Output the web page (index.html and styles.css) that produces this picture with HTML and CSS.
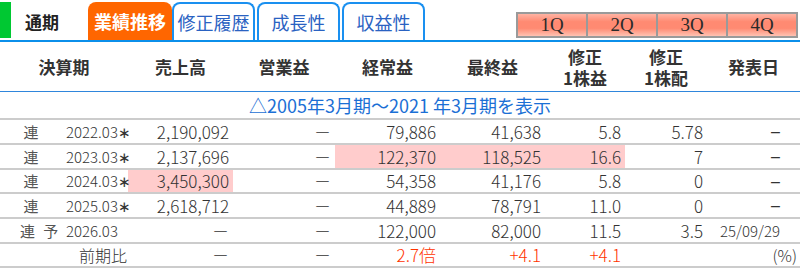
FILE: index.html
```html
<!DOCTYPE html>
<html lang="ja">
<head>
<meta charset="utf-8">
<title>業績推移</title>
<link rel="stylesheet" href="styles.css">
</head>
<body>
<div class="page">
  <div class="tabbar">
    <div class="mark"></div>
    <div class="tab tab-plain">通期</div>
    <div class="tab tab-active">業績推移</div>
    <div class="tab tab-link">修正履歴</div>
    <div class="tab tab-link">成長性</div>
    <div class="tab tab-link">収益性</div>
    <div class="quarters">
      <div class="q">1Q</div>
      <div class="q">2Q</div>
      <div class="q">3Q</div>
      <div class="q">4Q</div>
    </div>
  </div>
  <table class="fin">
    <colgroup>
      <col class="c-kind"><col class="c-date"><col class="c-sales"><col class="c-op"><col class="c-ord"><col class="c-net"><col class="c-eps"><col class="c-dps"><col class="c-day">
    </colgroup>
    <thead>
      <tr class="head">
        <th colspan="2">決算期</th>
        <th>売上高</th>
        <th>営業益</th>
        <th>経常益</th>
        <th>最終益</th>
        <th><span class="hline">修正</span><span class="hline">1株益</span></th>
        <th><span class="hline">修正</span><span class="hline">1株配</span></th>
        <th>発表日</th>
      </tr>
    </thead>
    <tbody>
      <tr class="info"><td colspan="9">△2005年3月期〜2021 年3月期を表示</td></tr>
      <tr class="row">
        <td class="kind">連</td><td class="date">2022.03∗</td>
        <td class="num">2,190,092</td><td class="num">－</td><td class="num">79,886</td><td class="num">41,638</td><td class="num">5.8</td><td class="num">5.78</td><td class="day"><span class="dash">–</span></td>
      </tr>
      <tr class="row">
        <td class="kind">連</td><td class="date">2023.03∗</td>
        <td class="num">2,137,696</td><td class="num">－</td><td class="num hl">122,370</td><td class="num hl">118,525</td><td class="num hl">16.6</td><td class="num">7</td><td class="day"><span class="dash">–</span></td>
      </tr>
      <tr class="row row-short">
        <td class="kind">連</td><td class="date">2024.03∗</td>
        <td class="num hl">3,450,300</td><td class="num">－</td><td class="num">54,358</td><td class="num">41,176</td><td class="num">5.8</td><td class="num">0</td><td class="day"><span class="dash">–</span></td>
      </tr>
      <tr class="row">
        <td class="kind">連</td><td class="date">2025.03∗</td>
        <td class="num">2,618,712</td><td class="num">－</td><td class="num">44,889</td><td class="num">78,791</td><td class="num">11.0</td><td class="num">0</td><td class="day"><span class="dash">–</span></td>
      </tr>
      <tr class="row">
        <td class="kind kind-yo">連 予</td><td class="date">2026.03</td>
        <td class="num">－</td><td class="num">－</td><td class="num">122,000</td><td class="num">82,000</td><td class="num">11.5</td><td class="num">3.5</td><td class="day">25/09/29</td>
      </tr>
      <tr class="row row-short">
        <td class="ratio" colspan="2">前期比</td>
        <td class="num">－</td><td class="num">－</td><td class="num up">2.7倍</td><td class="num up">+4.1</td><td class="num up">+4.1</td><td class="num"></td><td class="unit">(%)</td>
      </tr>
    </tbody>
  </table>
</div>
</body>
</html>
```
FILE: styles.css
```css
body {
  margin: 0;
  background: #fff;
  font-family: "Noto Sans CJK JP", "Noto Sans", sans-serif;
  color: #333;
}

.page {
  width: 800px;
}

/* ---------- tab bar ---------- */
.tabbar {
  display: flex;
  align-items: flex-end;
  height: 40px;
  border-bottom: 2px solid #0b8fea;
}

.mark {
  width: 11px;
  height: 36px;
  margin-bottom: 2px;
  background: #00c832;
}

.tab {
  box-sizing: border-box;
  height: 38px;
  display: flex;
  align-items: center;
  justify-content: center;
  font-size: 18px;
  line-height: 1;
}

.tab-plain {
  width: 77px;
  justify-content: flex-start;
  padding-left: 14px;
  font-size: 17px;
  font-weight: bold;
  color: #222;
}

.tab-active {
  width: 84px;
  background: #ff6600;
  color: #fff;
  font-weight: bold;
  border-radius: 8px 8px 0 0;
}

.tab-link {
  width: 83px;
  margin-right: 2px;
  border: 2px solid #1a90f0;
  border-bottom: 0;
  border-radius: 8px 8px 0 0;
  color: #2a62c2;
}

.quarters {
  margin-left: auto;
  margin-right: 2px;
  margin-bottom: 2px;
  display: flex;
  gap: 2px;
  padding: 2px;
  background: #9a9a9a;
}

.q {
  width: 68px;
  height: 22px;
  display: flex;
  align-items: center;
  justify-content: center;
  font-family: "Liberation Serif", serif;
  font-size: 19px;
  color: #2a2a2a;
  background: linear-gradient(#ffb3a3 0%, #ff8a72 35%, #ff8a72 65%, #ffc2b2 100%);
}

/* ---------- table ---------- */
.fin {
  width: 800px;
  table-layout: fixed;
  border-collapse: separate;
  border-spacing: 0;
}

.c-kind { width: 62px; }
.c-date { width: 66px; }
.c-sales { width: 105px; }
.c-op { width: 102px; }
.c-ord { width: 105px; }
.c-net { width: 105px; }
.c-eps { width: 80px; }
.c-dps { width: 82px; }
.c-day { width: 93px; }

.fin th,
.fin td {
  padding: 0;
  white-space: nowrap;
}

.head {
  height: 50px;
}

.fin th {
  font-size: 17px;
  font-weight: bold;
  line-height: 21px;
  color: #333;
  border-bottom: 1px solid #2f86dc;
}

.hline {
  display: block;
  height: 21px;
}

.info {
  height: 26px;
}

.info td {
  text-align: center;
  font-size: 18px;
  color: #1b6fd5;
  border-bottom: 2px solid #cccccc;
}

.row {
  height: 25px;
}

.row-short {
  height: 24px;
}

.row td {
  border-bottom: 2px solid #cccccc;
  font-size: 17px;
  font-weight: 300;
  line-height: 20px;
}

.row td.kind {
  text-align: center;
  font-size: 15px;
  color: #555;
  font-weight: normal;
}

.row td.kind-yo {
  text-align: left;
  padding-left: 20px;
  word-spacing: 5px;
}

.row td.date {
  padding-left: 4px;
  font-size: 15px;
}

.row td.num {
  text-align: right;
  padding-right: 4px;
}

.row td.day {
  text-align: right;
  padding-right: 20px;
  font-size: 15px;
}

.dash {
  font-family: "Liberation Sans", sans-serif;
  font-size: 16px;
  font-weight: normal;
  color: #333;
}

.row td.unit {
  text-align: right;
  padding-right: 3px;
  font-size: 16px;
}

.row td.ratio {
  text-align: right;
  padding-right: 1px;
  font-size: 16px;
}

.hl {
  background: #ffcccc;
}

.up {
  color: #ff3300;
}
```
